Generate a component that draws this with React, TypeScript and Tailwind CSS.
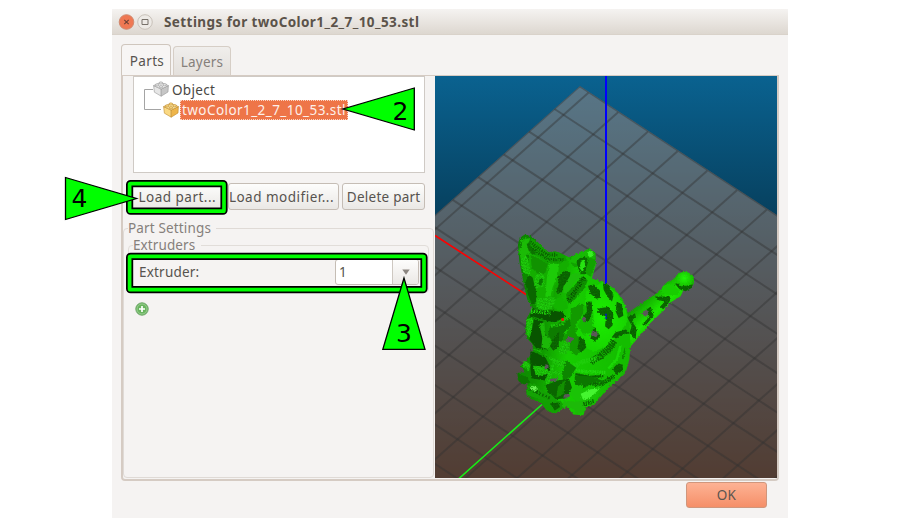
import React from "react";

const rows = Array.from({ length: 24 }, (_, i) => i);

function Brick({ gold }: { gold?: boolean }) {
  const top = gold ? "#fbe7a8" : "#f1f1f1";
  const left = gold ? "#fad983" : "#e6e6e6";
  const right = gold ? "#eeb54a" : "#c6c6c6";
  const line = gold ? "#c08c30" : "#999999";
  return (
    <svg width="16" height="16" viewBox="0 0 16 16" className="shrink-0">
      <g stroke={line} strokeWidth=".6" strokeLinejoin="round">
        <path d="M.6 4.6 8.2 8v7.2L1.4 11.2z" fill={left} />
        <path d="M8.2 8 15.4 4.6l-.4 6.4-6.8 4.2z" fill={right} />
        <path d="M.6 4.6 7.8 1.4l7.6 3.2L8.2 8z" fill={top} />
        <path d="M6.2 2.6V1.4q1.7-1.1 3.4 0v1.2q-1.7 1.1-3.4 0zM10 4.3V3.1q1.7-1.1 3.4 0v1.2q-1.7 1.1-3.4 0zM2.4 4.5V3.3q1.7-1.1 3.4 0v1.2q-1.7 1.1-3.4 0zM6.3 6.3V5.1q1.7-1.1 3.4 0v1.2q-1.7 1.1-3.4 0z" fill={left} />
      </g>
    </svg>
  );
}

function Cat() {
  return (
    <g transform="translate(500 225) scale(.33333)">
      <defs>
        <linearGradient id="body" x1="0" y1="0" x2="1" y2=".2">
          <stop offset="0" stopColor="#0c8200" />
          <stop offset=".3" stopColor="#0f9200" />
          <stop offset=".55" stopColor="#17cc00" />
          <stop offset="1" stopColor="#14bd00" />
        </linearGradient>
        <linearGradient id="tail" x1=".3" y1=".3" x2=".7" y2=".75">
          <stop offset="0" stopColor="#119c00" />
          <stop offset=".45" stopColor="#1de800" />
          <stop offset="1" stopColor="#118d00" />
        </linearGradient>
        <radialGradient id="ball" cx=".45" cy=".35" r=".8">
          <stop offset="0" stopColor="#22f508" />
          <stop offset=".6" stopColor="#17c200" />
          <stop offset="1" stopColor="#0d8400" />
        </radialGradient>
        <radialGradient id="haunch" cx=".5" cy=".5" r=".6">
          <stop offset="0" stopColor="#1bee00" />
          <stop offset="1" stopColor="#17cf00" />
        </radialGradient>
        <pattern id="hatch" width="8" height="9" patternUnits="userSpaceOnUse" patternTransform="rotate(-8)">
          <path d="M0 0h8v9H0z" fill="#095c00" />
          <path d="M0 1.5h5M4 5.5h4" stroke="#0c7a00" strokeWidth="2" />
        </pattern>
        <pattern id="ribs" width="8" height="9" patternUnits="userSpaceOnUse" patternTransform="rotate(14)">
          <path d="M0 0h8v9H0z" fill="#14a403" />
          <path d="M2 0v6M6 4v5" stroke="#22dc0e" strokeWidth="3" />
        </pattern>
        <filter id="rough" x="-5%" y="-5%" width="110%" height="110%" colorInterpolationFilters="sRGB">
          <feTurbulence type="fractalNoise" baseFrequency=".2" numOctaves="2" seed="4" />
          <feDisplacementMap in="SourceGraphic" scale="9" xChannelSelector="R" yChannelSelector="G" />
        </filter>
      </defs>
      <g filter="url(#rough)">
        {/* tail */}
        <path d="M376 270 420 240 470 206 502 172 522 164Q530 144 550 143 578 146 582 170 578 194 550 197L542 215 508 236 487 262 452 295 421 332 390 368z" fill="url(#tail)" />
        <circle cx="555" cy="169" r="27" fill="url(#ball)" />
        {/* body and head */}
        <path d="M75 30Q57 36 54 60L58 110 70 172 82 226 97 250 80 282 76 315 82 342 97 360 100 380 84 402 62 425 76 443 54 445 53 466 68 477 84 480 77 500 88 520 124 536 142 560 166 566 200 546 220 570 250 572 259 548 284 540 318 497 352 468 378 440 388 404 392 360 388 300 382 260 365 220 342 192 318 176 276 162 287 120 286 86 272 73 240 84 208 98 166 80 140 83 112 52 96 36z" fill="url(#body)" />
        {/* face */}
        <path d="M88 87 122 96 152 113 184 109 199 100 208 120 195 146 164 183 160 218 130 222 110 234 94 208 84 160z" fill="#14ae00" />
        <path d="M148 118 178 116 174 150 158 188 151 217 136 217 140 165z" fill="#1dcb08" />
        <path d="M92 91 144 116 136 145 115 150 95 130z" fill="#119200" />
        <path d="M88 150 98 160 108 200 110 230 96 240 84 210 76 172z" fill="#0a6600" />
        <path d="M62 92Q80 83 88 116L91 151 74 147 63 128z" fill="url(#ribs)" />
        <path d="M57 82 62 47Q73 31 90 45L82 61 93 91 78 91 63 104z" fill="#1bbb06" />
        <path d="M80 58 88 56 104 75 110 88 99 90 86 78z" fill="#0c7300" />
        <path d="M94 41 114 54 147 84 176 83 194 92 200 107 180 118 140 117 113 96 91 61z" fill="#11a000" />
        <path d="M91 52 112 68 140 90 172 92M96 66 118 88 150 106 190 106" stroke="#0a6500" strokeWidth="9" strokeDasharray="4 3" fill="none" />
        <path d="M62 70 64 50Q72 36 88 42" stroke="#0c7a00" strokeWidth="6" strokeDasharray="3 5" fill="none" />
        <path d="M106 151 123 145 134 160 130 186 110 193 102 177z" fill="url(#ribs)" />
        <path d="M121 156 129 168 124 184 114 181z" fill="#0a7a00" />
        {/* right ear and cheek */}
        <path d="M208 100Q235 88 266 74L285 83 288 112 272 157 249 142 236 127 220 128z" fill="#11a200" />
        <path d="M240 84 271 74 286 86 284 104 261 96 239 103 226 118 210 112 214 98z" fill="#17bb04" />
        <path d="M261 84 274 78 281 90 270 101z" fill="#38f024" />
        <path d="M230 107 252 97 266 108 258 132 258 149 244 149 232 127z" fill="#0a6c00" />
        <path d="M242 109 252 106 256 120 248 144 240 132z" fill="#27e412" />
        <path d="M173 156 194 139 211 143 209 170 191 184 183 207 168 203 176 179z" fill="url(#hatch)" />
        <path d="M212 151 237 143 244 157 217 179 202 206 190 205 192 185z" fill="#1dbd0a" />
        <path d="M249 153 263 168 255 189 224 226 205 239 198 210z" fill="#0f9000" />
        <path d="M252 158 236 185 205 230" stroke="#084f00" strokeWidth="13" strokeDasharray="3 4" fill="none" />
        <path d="M160 228 178 218 201 230 204 251 181 260 159 245z" fill="#13b400" />
        <path d="M109 222 160 218 166 228 154 253 130 258 109 248z" fill="url(#ribs)" />
        <path d="M97 250 123 258 157 258 188 263 197 276 167 293 145 290 102 277 83 302z" fill="#085400" />
        <path d="M93 258 151 266" stroke="#20cf0c" strokeWidth="13" strokeDasharray="5 3" fill="none" />
        {/* chest */}
        <path d="M80 285 98 277 94 342 79 329z" fill="url(#ribs)" />
        <path d="M102 284 134 292 131 325 149 342 145 375 109 371 88 345 98 306z" fill="#085500" />
        <path d="M118 300 134 292 135 330 153 345 148 375 124 368 127 340z" fill="#1cb808" />
        <path d="M150 309 207 278 218 301 195 319 190 350 159 353 144 330z" fill="#0d7c00" />
        <path d="M153 305 188 298 190 288 214 276" stroke="#1cc408" strokeWidth="10" strokeDasharray="5 3" fill="none" />
        <path d="M212 253 249 236 252 264 226 302 244 341 250 376 229 393 195 370 188 340 211 310z" fill="#129a00" />
        {/* bright flank */}
        <path d="M258 200 306 174 349 204 375 242 384 287 358 329 320 365 280 381 254 368 226 323 247 296 253 250z" fill="url(#haunch)" />
        <path d="M253 240 280 265 280 323 250 331 232 303 247 280z" fill="#14ba00" />
        {[
          "M264 184 282 180 300 198 300 220 289 223 270 206z",
          "M309 177 324 180 341 212 336 231 322 217 311 196z",
          "M293 252 326 247 340 267 338 302 326 314 315 305 318 276 295 267z",
          "M258 232 275 231 277 260 266 291 254 293 250 276 261 261z",
          "M350 232 366 239 370 274 356 281 347 261z",
          "M282 307 301 334 284 351 272 340z",
          "M236 335 253 346 259 368 245 384 231 371 236 356z",
          "M335 338 347 323 378 315 391 328 373 328 350 341z",
          "M160 345 178 320 176 367 160 379 150 365z",
          "M338 433 353 417 369 421 366 440 348 451z",
        ].map((d) => <path key={d} d={d} fill="url(#hatch)" />)}
        <path d="M343 349 325 375 299 396 270 412" stroke="#0a6a00" strokeWidth="20" strokeDasharray="5 2" fill="none" />
        <path d="M246 488 266 475 302 481 342 455" stroke="#0a6500" strokeWidth="13" strokeDasharray="5 2" fill="none" />
        <path d="M362 362 350 405 325 432" stroke="#1bd806" strokeWidth="7" fill="none" />
        <path d="M376 370 368 404" stroke="#0e8a00" strokeWidth="5" fill="none" />
        <path d="M174 382 193 348 209 354 209 377 190 390z" fill="url(#ribs)" />
        <path d="M222 426 248 412 292 402" stroke="#1fce0b" strokeWidth="14" strokeDasharray="6 2" fill="none" />
        <path d="M226 449 268 457 310 455" stroke="#0a6400" strokeWidth="7" fill="none" />
        <path d="M221 437 258 441 316 444" stroke="#22d60e" strokeWidth="10" strokeDasharray="5 2" fill="none" />
        {/* paws */}
        <path d="M91 378 136 398 151 428 135 468 94 461 91 425z" fill="#085600" />
        <path d="M92 373 117 377 151 399 192 407 202 427 176 427 157 414 139 389z" fill="url(#ribs)" />
        <path d="M64 424 75 409 92 421 87 439z" fill="url(#ribs)" />
        <path d="M52 446 83 459 91 474 72 480 56 470z" fill="#0d7500" />
        <path d="M99 424 140 426 148 447 109 455z" fill="url(#ribs)" />
        <path d="M151 424 162 418 161 437 187 441 184 454 160 449 142 486 137 475z" fill="url(#ribs)" />
        <path d="M199 409 229 430 211 458 190 472 186 448z" fill="#0d8600" />
        <path d="M137 482 172 468 207 463 216 490 196 521 164 525 145 512z" fill="#0a6600" />
        <path d="M174 486 195 467 191 508 169 520z" fill="#129000" />
        <path d="M224 453 270 455 317 472 276 474 246 492 225 480z" fill="#0c7800" />
        <path d="M220 489 245 480 249 499 306 482 294 517 269 535 227 527 208 509z" fill="#1ac306" />
        <path d="M242 508 272 494 300 492 268 522 249 526z" fill="#45f530" />
        <path d="M84 482 103 476 132 502 155 511 171 529 149 535 119 524 79 511z" fill="#14a204" />
        <path d="M90 494 120 508 152 522" stroke="#0a6800" strokeWidth="9" strokeDasharray="5 5" fill="none" />
        <path d="M97 484 110 488 109 500 92 496z" fill="#66ee50" />
        <path d="M121 529 182 529 194 547 167 566 143 561z" fill="#12a002" />
        <path d="M150 536 176 534 180 548 164 558z" fill="url(#hatch)" />
        <path d="M190 529 226 531 256 529 256 560 231 569 219 551 188 547z" fill="#1cba08" />
        <path d="M250 538 284 530" stroke="#0a6800" strokeWidth="14" strokeDasharray="4 3" fill="none" />
        {/* tail bands */}
        <path d="M382 279 405 266 408 279 396 290 410 311 407 345 389 324 395 303z" fill="url(#hatch)" />
        <path d="M440 255 452 246 461 274 436 304 426 299 446 280z" fill="url(#hatch)" />
        <path d="M465 216 513 216 509 230 490 254 480 247 494 231 471 226z" fill="url(#hatch)" />
        <path d="M524 176 536 178 542 186 566 182 578 180 576 190 557 200 538 194z" fill="url(#hatch)" />
        <path d="M489 184 512 177 541 199 532 212 502 211 482 204z" fill="#18cd00" />
        {/* openings through the mesh */}
        <path d="M426 268 437 256 447 261 441 276 430 275zM270 331 280 320 296 325 289 338zM245 285 253 275 258 282 256 293zM194 349 206 336 225 342 210 353zM149 464 174 459 168 472 151 471zM192 511 209 507 208 519 190 520zM132 427 143 417 147 428 136 435z" fill="#5b5659" />
      </g>
      <path d="M184 281h8v8h-8z" fill="#f30909" />
      <path d="M318 268v16" stroke="#0000ff" strokeWidth="4" strokeDasharray="6 3" />
    </g>
  );
}

function Preview() {
  return (
    <svg width="342" height="402" viewBox="435 76.5 342 402" className="block">
      <defs>
        <linearGradient id="sky" x1="0" y1="0" x2="0" y2="1">
          <stop stopColor="#0a6290" />
          <stop offset="1" stopColor="#000" />
        </linearGradient>
        <clipPath id="plate">
          <path d="M580 86.5 780 217.5V479H434V216.5z" />
        </clipPath>
      </defs>
      <path d="M435 76h342v403H435z" fill="url(#sky)" />
      <path d="M580 86.5 780 217.5V479H434V216.5z" fill="#cc9980" fillOpacity=".4" />
      <g clipPath="url(#plate)" stroke="#333" strokeOpacity=".42" strokeWidth="2">
        {rows.map((i) => (
          <line key={`a${i}`} x1={580 - i * 25.45} y1={86.8 + i * 22.7} x2={980 - i * 25.45} y2={349 + i * 22.7} />
        ))}
        <path d="M580 86.5 430 220.2" />
        {rows.map((i) => (
          <line key={`b${i}`} x1={588.4 + i * 29.7} y1={93.2 + i * 19.5} x2={88.4 + i * 29.7} y2={539 + i * 19.5} />
        ))}
      </g>
      <path d="M606 76V285" stroke="#0000ff" strokeWidth="2" />
      <path d="M435 236 526 295" stroke="#ff0000" strokeWidth="1.6" />
      <path d="M459 479 542 405" stroke="#16ee16" strokeWidth="1.6" />
      <Cat />
    </svg>
  );
}

const button =
  "flex h-[27px] items-center justify-center rounded-[3px] border border-[#c5bdb5] bg-gradient-to-b from-[#fdfdfc] to-[#eae8e5] whitespace-nowrap";

export default function App() {
  return (
    <div className="relative h-[527px] w-[900px] overflow-hidden bg-white pt-[9px] pl-[112px] font-['Noto_Sans','Open_Sans',sans-serif] text-[13.5px] leading-4 tracking-[.1px] text-[#57534f]">
      <div className="flex h-[509px] w-[676px] flex-col bg-[#f5f3f2]">
        <div className="flex h-[26px] shrink-0 items-center rounded-t-[3px] border-b border-[#d9d2ca] bg-gradient-to-b from-[#f5f3f1] to-[#ddd7d0] pl-[6px]">
          <svg width="36" height="18" viewBox="0 0 36 18" className="shrink-0">
            <circle cx="8.5" cy="9" r="7.3" fill="#ef7853" stroke="#d08a70" />
            <path d="M6.3 6.8l4.4 4.4m0-4.4-4.4 4.4" stroke="#6d4034" strokeWidth="1.1" />
            <circle cx="27" cy="9" r="7.3" fill="#edeae6" stroke="#c9c2ba" />
            <path d="M24 6.5h6v5h-6z" fill="none" stroke="#77716a" />
          </svg>
          <h1 className="ml-[10px] text-[13.5px] font-bold tracking-[.42px] whitespace-nowrap text-[#5b534a]">Settings for twoColor1_2_7_10_53.stl</h1>
        </div>
        <div className="flex h-[40px] shrink-0 items-end gap-[2px] pl-[9px]">
          <div className="z-10 flex h-[31px] w-[50px] items-center justify-center rounded-t border border-b-0 border-[#cfc6bd] bg-[#f7f5f4] pt-[1px] pl-[2px] tracking-[.35px]">Parts</div>
          <div className="flex h-[29px] w-[58px] items-center justify-center rounded-t border border-b-0 border-[#d6cec6] bg-gradient-to-b from-[#f0eeec] to-[#e4e0dc] pt-[1px] tracking-[.2px] text-[#85807b]">Layers</div>
        </div>
        <div className="ml-[9px] flex h-[406px] w-[658px] shrink-0 rounded-b border-2 border-t border-[#d5cbc3] bg-[#f5f3f2]">
          <div className="flex w-[312px] shrink-0 flex-col">
            <div className="ml-[10px] h-[97px] w-[292px] border border-[#cfcac5] bg-white">
              <div className="relative pt-[3px] pl-[19px]">
                <svg width="18" height="28" viewBox="0 0 18 28" className="absolute top-[8px] left-[9px]">
                  <path d="M10 4.5H1.5v20H18" fill="none" stroke="#a4a4a4" />
                </svg>
                <div className="relative flex h-[18px] items-center gap-[3px]">
                  <Brick />
                  <span className="pt-[2px] tracking-[.3px] text-[#4a4744]">Object</span>
                </div>
                <div className="relative mt-[2px] flex h-[20px] items-center gap-[1px] pl-[10px]">
                  <Brick gold />
                  <span className="flex h-[20px] w-[168px] items-center border border-dotted border-[#fbd5c4] bg-[#ee7548] pl-[1px] tracking-[.43px] whitespace-nowrap text-[#fdf0ea]">twoColor1_2_7_10_53.stl</span>
                </div>
              </div>
            </div>
            <div className="mt-[10px] ml-[7px] flex w-[295px] gap-[3px]">
              <div className={`${button} w-[95px] tracking-[.5px]`}>Load part...</div>
              <div className={`${button} w-[112px] pr-[4px] tracking-[.5px]`}>Load modifier...</div>
              <div className={`${button} w-[83px] tracking-[.25px]`}>Delete part</div>
            </div>
            <div className="mt-[18px] h-[250px] w-[311px] rounded border border-[#dfdad6] px-[4px]">
              <div className="-mt-[8px] w-[88px] bg-[#f5f3f2] leading-[14px] tracking-[.15px] whitespace-nowrap text-[#85807b]">Part Settings</div>
              <div className="mt-[10px] h-[48px] w-[301px] rounded border border-[#e1ddd9]">
                <div className="-mt-[8px] ml-[4px] w-[68px] bg-[#f5f3f2] leading-[14px] text-[#85807b]">Extruders</div>
                <div className="mt-[6px] flex h-[28px] items-center pl-[10px]">
                  <span className="w-[196px] tracking-[.2px]">Extruder:</span>
                  <div className="flex h-[26px] w-[84px] overflow-hidden rounded-[3px] border border-[#c5bdb5] bg-white">
                    <div className="flex w-[57px] items-center border-r border-[#cec8c1] pl-[3px]">1</div>
                    <div className="flex flex-1 items-center justify-center bg-gradient-to-b from-[#fdfdfc] to-[#ebe8e5]">
                      <svg width="8" height="6" viewBox="0 0 8 6"><path d="M.3.5h7.4L4 5.8z" fill="#8b8580" /></svg>
                    </div>
                  </div>
                </div>
              </div>
              <svg width="14" height="14" viewBox="0 0 14 14" className="mt-[9px] ml-[7px]">
                <circle cx="7" cy="7" r="6.2" fill="#68b45e" stroke="#6fa66a" />
                <circle cx="7" cy="7" r="5" fill="none" stroke="#a3d39b" strokeWidth=".8" />
                <path d="M7 4v6M4 7h6" stroke="#fff" strokeWidth="1.7" />
              </svg>
            </div>
          </div>
          <Preview />
        </div>
        <div className="flex justify-end pt-[1px] pr-[21px]">
          <div className="flex h-[26px] w-[81px] items-center justify-center rounded-[3px] border border-[#d0967c] bg-gradient-to-b from-[#fdb294] to-[#f58f68] tracking-[.4px] text-[#5d5550]">OK</div>
        </div>
      </div>
      <svg width="900" height="527" viewBox="0 0 900 527" className="absolute inset-0">
        <g fill="none">
          <rect x="129.6" y="183.6" width="94.4" height="27.6" rx="1" stroke="#000" strokeWidth="7.2" strokeLinejoin="round" />
          <rect x="129.6" y="183.6" width="94.4" height="27.6" rx="1" stroke="#00ff00" strokeWidth="3.7" />
          <rect x="129.6" y="256.3" width="294.4" height="33.4" rx="1" stroke="#000" strokeWidth="7.2" strokeLinejoin="round" />
          <rect x="129.6" y="256.3" width="294.4" height="33.4" rx="1" stroke="#00ff00" strokeWidth="3.7" />
        </g>
        <g fill="#00ff00" stroke="#000" strokeWidth="1.3">
          <path d="M65.5 177.5v42l71-21z" />
          <path d="M414.3 88v42L343 109z" />
          <path d="M404 278 382.8 349.3h42.2z" />
        </g>
        <g className="font-['DejaVu_Sans',sans-serif] text-[25px] tracking-normal" fill="#000">
          <text x="71.5" y="207.3">4</text>
          <text x="392.5" y="119.8">2</text>
          <text x="396" y="342">3</text>
        </g>
      </svg>
    </div>
  );
}
